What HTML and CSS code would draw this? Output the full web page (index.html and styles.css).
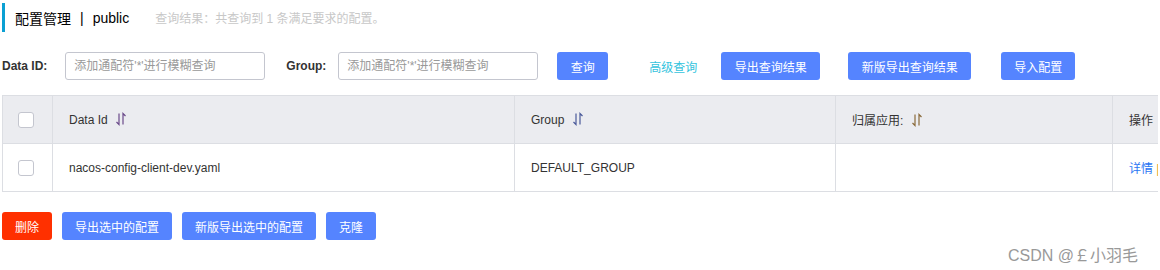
FILE: index.html
```html
<!DOCTYPE html>
<html lang="zh-CN">
<head>
    <meta charset="UTF-8">
    <meta name="viewport" content="width=device-width, initial-scale=1.0">
    <title>配置管理</title>
    <link rel="stylesheet" href="styles.css">
</head>
<body>

<div class="page-title">
    <span class="title-text">配置管理</span>
    <span class="title-sep">|</span>
    <span class="title-text">public</span>
    <span class="title-desc">查询结果：共查询到 1 条满足要求的配置。</span>
</div>

<div class="search-bar">
    <label class="search-label">Data ID:</label>
    <input class="search-input" type="text" placeholder="添加通配符'*'进行模糊查询">
    <label class="search-label group-label">Group:</label>
    <input class="search-input" type="text" placeholder="添加通配符'*'进行模糊查询">
    <button class="btn btn-query">查询</button>
    <a class="link-advanced">高级查询</a>
    <button class="btn btn-export">导出查询结果</button>
    <button class="btn btn-export-new">新版导出查询结果</button>
    <button class="btn btn-import">导入配置</button>
</div>

<div class="table-wrap">
    <table class="config-table">
        <thead>
            <tr>
                <th class="col-check"><span class="checkbox"></span></th>
                <th class="col-id">Data Id <svg class="sort-icon" width="12" height="14" viewBox="0 0 12 14"><path d="M4 1.5V12.5L1.5 10M8 12.5V1.5L10.5 4" fill="none" stroke="#6a4a8a" stroke-width="1.2"/></svg></th>
                <th class="col-group">Group <svg class="sort-icon" width="12" height="14" viewBox="0 0 12 14"><path d="M4 1.5V12.5L1.5 10M8 12.5V1.5L10.5 4" fill="none" stroke="#4a5a9a" stroke-width="1.2"/></svg></th>
                <th class="col-app">归属应用: <svg class="sort-icon" width="12" height="14" viewBox="0 0 12 14"><path d="M4 1.5V12.5L1.5 10M8 12.5V1.5L10.5 4" fill="none" stroke="#8a6a3a" stroke-width="1.2"/></svg></th>
                <th class="col-op">操作</th>
            </tr>
        </thead>
        <tbody>
            <tr>
                <td class="col-check"><span class="checkbox"></span></td>
                <td>nacos-config-client-dev.yaml</td>
                <td>DEFAULT_GROUP</td>
                <td></td>
                <td><a class="op-link">详情</a> <span class="op-sep">|</span></td>
            </tr>
        </tbody>
    </table>
</div>

<div class="batch-bar">
    <button class="btn btn-delete">删除</button>
    <button class="btn btn-export-sel">导出选中的配置</button>
    <button class="btn btn-export-sel-new">新版导出选中的配置</button>
    <button class="btn btn-clone">克隆</button>
</div>

<div class="watermark">CSDN @￡小羽毛</div>

</body>
</html>
```

FILE: styles.css
```css
body {
    font-family: "Liberation Sans", Arial, "Noto Sans CJK SC", sans-serif;
    font-size: 12px;
    color: #333;
    margin: 2px;
    overflow: hidden;
    background: #fff;
}

.page-title {
    display: flex;
    align-items: center;
    height: 29px;
    border-left: 3px solid #0ba0d3;
    padding-left: 10px;
    margin-top: 1px;
}

.title-text {
    font-size: 14px;
    color: #000;
}

.title-sep {
    font-size: 14px;
    color: #000;
    margin: 0 9px 0 9px;
}

.title-desc {
    color: #c8c8c8;
    margin-left: 26px;
}

.search-bar {
    display: flex;
    align-items: center;
    margin-top: 20px;
    height: 28px;
}

.search-label {
    font-weight: bold;
    color: #333;
    margin-right: 18px;
}

.group-label {
    margin-left: 21px;
    margin-right: 12px;
}

.search-input {
    width: 200px;
    height: 28px;
    box-sizing: border-box;
    border: 1px solid #c4c6cf;
    border-radius: 3px;
    padding: 0 8px;
    font-family: inherit;
    font-size: 12px;
    color: #333;
}

.search-input::placeholder {
    color: #999;
}

.btn {
    height: 28px;
    border: none;
    border-radius: 3px;
    background-color: #5584ff;
    color: white;
    font-family: inherit;
    font-size: 12px;
    padding: 0 12px;
    cursor: pointer;
}

.btn-query {
    margin-left: 19px;
    width: 51px;
}

.link-advanced {
    color: #33c3dd;
    margin-left: 41px;
    margin-right: 24px;
}

.btn-export {
    width: 99px;
}

.btn-export-new {
    width: 123px;
    margin-left: 28px;
}

.btn-import {
    width: 74px;
    margin-left: 30px;
}

.table-wrap {
    margin-top: 15px;
    width: 1226px;
}

.config-table {
    border-collapse: collapse;
    width: 1226px;
    table-layout: fixed;
}

.config-table th,
.config-table td {
    border: 1px solid #dcdee3;
    height: 47px;
    padding: 0 16px;
    text-align: left;
    font-weight: normal;
    color: #333;
    white-space: nowrap;
}

.config-table th {
    background-color: #ebecf0;
}

.config-table .col-check {
    width: 34px;
    padding: 0 0 0 15px;
}

.col-id {
    width: 429px;
}

.col-group {
    width: 288px;
}

.col-app {
    width: 244px;
}

.checkbox {
    display: block;
    width: 14px;
    height: 14px;
    border: 1px solid #c4c6cf;
    border-radius: 3px;
    background: #fff;
}

.sort-icon {
    vertical-align: -2px;
    margin-left: 4px;
}

.op-link {
    color: #2a76f4;
}

.op-sep {
    color: #e0a030;
}

.batch-bar {
    display: flex;
    gap: 10px;
    margin-top: 20px;
}

.btn-delete {
    background-color: #ff3000;
    width: 50px;
}

.btn-export-sel {
    width: 110px;
}

.btn-export-sel-new {
    width: 134px;
}

.btn-clone {
    width: 50px;
}

.watermark {
    position: absolute;
    left: 1008px;
    top: 242px;
    font-size: 16px;
    color: #999;
}
```
